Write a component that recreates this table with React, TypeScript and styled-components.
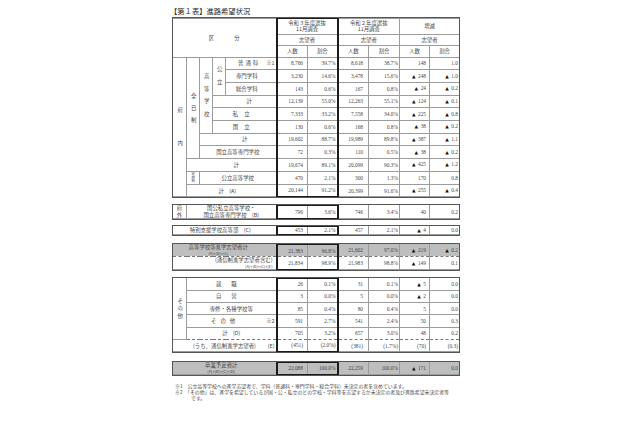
import React from 'react';
import styled, { createGlobalStyle, css } from 'styled-components';

const GlobalStyle = createGlobalStyle`
  html, body { margin: 0; background: #fff; }
  body {
    font-family: "Liberation Serif", "Noto Sans CJK JP", serif;
    color: #474747;
  }
`;

const Page = styled.div`
  width: 640px;
  height: 426px;
  box-sizing: border-box;
  padding: 6px 0 0 172px;
  overflow: hidden;
`;

const Title = styled.div`
  height: 11px;
  font-family: "Noto Sans CJK JP", sans-serif;
  font-size: 7.3px;
  line-height: 10px;
  color: #262626;
  margin-left: -2px;
`;

// each block of the report is its own small table
const Box = styled.table<{ $gap?: number }>`
  border-collapse: collapse;
  table-layout: fixed;
  width: 287px;
  margin-bottom: ${p => p.$gap ?? 6}px;
  outline: 1px solid #555;
  outline-offset: -1px;
`;

const Tr = styled.tr<{ $h: number }>`
  height: ${p => p.$h}px;
`;

type CellProps = {
  $al?: 'left' | 'right' | 'center';
  $pr?: number;
  $pl?: number;
  $ls?: number;
  $lh?: number;
  $tl?: boolean;
  $tr?: boolean;
  $tt?: boolean;
  $tb?: boolean;
  $gray?: boolean;
  $dt?: boolean;
  $db?: boolean;
};

const Td = styled.td<CellProps>`
  border: 1px solid #9c9c9c;
  padding: 0 ${p => p.$pr ?? 0}px 0 ${p => p.$pl ?? 0}px;
  font-size: 5.4px;
  line-height: ${p => p.$lh ?? 6}px;
  letter-spacing: ${p => p.$ls ?? 0}px;
  text-align: ${p => p.$al ?? 'center'};
  vertical-align: middle;
  white-space: nowrap;
  overflow: hidden;
  background: ${p => (p.$gray ? '#bebebe' : 'transparent')};
  ${p => p.$dt && css`border-top: 1px dashed #777;`}
  ${p => p.$db && css`border-bottom: 1px dashed #777;`}
  ${p => p.$tl && css`border-left: 2px solid #1c1c1c;`}
  ${p => p.$tr && css`border-right: 2px solid #1c1c1c;`}
  ${p => p.$tt && css`border-top: 2px solid #1c1c1c;`}
  ${p => p.$tb && css`border-bottom: 2px solid #1c1c1c;`}
`;

const Lab = styled(Td)`
  font-family: "Noto Sans CJK JP", sans-serif;
`;

const Vert = styled.span<{ $ls: number; $fs?: number }>`
  display: inline-block;
  writing-mode: vertical-rl;
  letter-spacing: ${p => p.$ls}px;
  font-size: ${p => p.$fs ?? 5.4}px;
  line-height: 1;
  margin-top: ${p => p.$ls}px;
`;

const Mark = styled.span`
  float: right;
  margin-right: 1px;
  letter-spacing: 0;
`;

const Small = styled.span`
  font-size: 4px;
  letter-spacing: 0;
`;

const Tri = styled.span`
  font-family: "DejaVu Sans", sans-serif;
  font-size: 4.6px;
  color: #111;
  margin-right: 2.5px;
`;

const Notes = styled.div`
  margin-top: 7px;
  width: 292px;
  font-family: "Noto Sans CJK JP", sans-serif;
  font-size: 4.9px;
  line-height: 6px;
  color: #4a4a4a;
`;

const Note = styled.div`
  padding-left: 19px;
  text-indent: -16px;
  white-space: nowrap;
`;

const Cols = () => (
  <colgroup>
    {[14, 13, 13, 13, 51, 31, 30, 31, 31, 30, 30].map((w, i) => (
      <col key={i} style={{ width: w }} />
    ))}
  </colgroup>
);

const fmt = (s: string) =>
  s.startsWith('▲') ? (
    <>
      <Tri>▲</Tri>
      {s.slice(1)}
    </>
  ) : (
    s
  );

type DataProps = {
  v: string[];
  first?: boolean;
  last?: boolean;
  gray?: boolean;
  dt?: boolean;
  db?: boolean;
};

const Data: React.FC<DataProps> = ({ v, first, last, gray, dt, db }) => {
  const pads = [4, 1, 5, 1, 3, 1];
  return (
    <>
      {v.map((x, i) => (
        <Td
          key={i}
          $al="right"
          $pr={pads[i]}
          $gray={gray}
          $dt={dt}
          $db={db}
          $tl={i === 0}
          $tr={i === 1}
          $tt={first && i < 2}
          $tb={last && i < 2}
        >
          {fmt(x)}
        </Td>
      ))}
    </>
  );
};

const R = 12.7;
const S = 12.3;

const App: React.FC = () => (
  <Page>
    <GlobalStyle />
    <Title>【第１表】進路希望状況</Title>

    <Box $gap={6}>
      <Cols />
      <tbody>
        <Tr $h={16}>
          <Lab colSpan={5} rowSpan={3} $ls={20} $pl={20}>区分</Lab>
          <Lab colSpan={2} $tl $tr $tt $lh={6.5}>令和３年度選抜<br />11月調査</Lab>
          <Lab colSpan={2} $lh={6.5}>令和２年度選抜<br />11月調査</Lab>
          <Lab colSpan={2}>増減</Lab>
        </Tr>
        <Tr $h={11}>
          <Lab colSpan={2} $tl $tr>志望者</Lab>
          <Lab colSpan={2}>志望者</Lab>
          <Lab colSpan={2}>志望者</Lab>
        </Tr>
        <Tr $h={12}>
          <Lab $tl>人数</Lab>
          <Lab $tr>割合</Lab>
          <Lab>人数</Lab>
          <Lab>割合</Lab>
          <Lab>人数</Lab>
          <Lab>割合</Lab>
        </Tr>
        <Tr $h={R}>
          <Lab rowSpan={11}><Vert $ls={28}>府内</Vert></Lab>
          <Lab rowSpan={8}><Vert $ls={6.6}>全日制</Vert></Lab>
          <Lab rowSpan={6}><Vert $ls={7.4}>高等学校</Vert></Lab>
          <Lab rowSpan={3}><Vert $ls={7.4}>公立</Vert></Lab>
          <Lab $al="left" $pl={12} $ls={2}>普通科<Mark>※1</Mark></Lab>
          <Data v={['8,766', '39.7%', '8,618', '38.7%', '148', '1.0']} />
        </Tr>
        <Tr $h={R}>
          <Lab $pr={8}>専門学科</Lab>
          <Data v={['3,230', '14.6%', '3,478', '15.6%', '▲248', '▲1.0']} />
        </Tr>
        <Tr $h={R}>
          <Lab $pr={8}>総合学科</Lab>
          <Data v={['143', '0.6%', '167', '0.8%', '▲24', '▲0.2']} />
        </Tr>
        <Tr $h={R}>
          <Lab colSpan={2} $pl={10}>計</Lab>
          <Data v={['12,139', '55.0%', '12,263', '55.1%', '▲124', '▲0.1']} />
        </Tr>
        <Tr $h={R}>
          <Lab colSpan={2} $ls={6}>私立</Lab>
          <Data v={['7,333', '33.2%', '7,558', '34.0%', '▲225', '▲0.8']} />
        </Tr>
        <Tr $h={R}>
          <Lab colSpan={2} $ls={6}>国立</Lab>
          <Data v={['130', '0.6%', '168', '0.8%', '▲38', '▲0.2']} />
        </Tr>
        <Tr $h={R}>
          <Lab colSpan={3} $pl={14}>計</Lab>
          <Data v={['19,602', '88.7%', '19,989', '89.8%', '▲387', '▲1.1']} />
        </Tr>
        <Tr $h={R}>
          <Lab colSpan={3}>国立高等専門学校</Lab>
          <Data v={['72', '0.3%', '110', '0.5%', '▲38', '▲0.2']} />
        </Tr>
        <Tr $h={R}>
          <Lab colSpan={4} $pl={10}>計</Lab>
          <Data v={['19,674', '89.1%', '20,099', '90.3%', '▲425', '▲1.2']} />
        </Tr>
        <Tr $h={R}>
          <Lab><Vert $ls={0.2} $fs={3.4}>定時制</Vert></Lab>
          <Lab colSpan={3}>公立高等学校</Lab>
          <Data v={['470', '2.1%', '300', '1.3%', '170', '0.8']} />
        </Tr>
        <Tr $h={R}>
          <Lab colSpan={4} $pr={8}>計　(A)</Lab>
          <Data v={['20,144', '91.2%', '20,399', '91.6%', '▲255', '▲0.4']} last />
        </Tr>
      </tbody>
    </Box>

    <Box $gap={5}>
      <Cols />
      <tbody>
        <Tr $h={13}>
          <Lab $lh={6.5}>府<br />外</Lab>
          <Lab colSpan={4} $lh={6.5}>国公私立高等学校・<br />国立高等専門学校　(B)</Lab>
          <Data v={['796', '3.6%', '746', '3.4%', '40', '0.2']} first last />
        </Tr>
      </tbody>
    </Box>

    <Box $gap={7}>
      <Cols />
      <tbody>
        <Tr $h={9}>
          <Lab colSpan={5} $pr={8}>特別支援学校高等部　(C)</Lab>
          <Data v={['453', '2.1%', '457', '2.1%', '▲4', '0.0']} first last />
        </Tr>
      </tbody>
    </Box>

    <Box $gap={6}>
      <Cols />
      <tbody>
        <Tr $h={12}>
          <Lab colSpan={5} $gray $db $pr={12}>
            高等学校等進学志望者計<br />
            <Small>(A)+(B)+(C)</Small>
          </Lab>
          <Data v={['21,383', '96.8%', '21,602', '97.0%', '▲219', '▲0.2']} first gray db />
        </Tr>
        <Tr $h={12}>
          <Lab colSpan={5} $dt $al="right" $pr={3}>
            (通信制進学志望者含む)<br />
            <Small>(A)+(B)+(C)+(E)</Small>
          </Lab>
          <Data v={['21,834', '98.9%', '21,983', '98.8%', '▲149', '0.1']} last dt />
        </Tr>
      </tbody>
    </Box>

    <Box $gap={8}>
      <Cols />
      <tbody>
        <Tr $h={S}>
          <Lab rowSpan={5}><Vert $ls={2}>その他</Vert></Lab>
          <Lab colSpan={4} $ls={10}>就職</Lab>
          <Data v={['26', '0.1%', '31', '0.1%', '▲5', '0.0']} first />
        </Tr>
        <Tr $h={S}>
          <Lab colSpan={4} $ls={10}>自営</Lab>
          <Data v={['3', '0.0%', '5', '0.0%', '▲2', '0.0']} />
        </Tr>
        <Tr $h={S}>
          <Lab colSpan={4}>専修・各種学校等</Lab>
          <Data v={['85', '0.4%', '80', '0.4%', '5', '0.0']} />
        </Tr>
        <Tr $h={S}>
          <Lab colSpan={4} $ls={4} $al="left" $pl={24}>その他<Mark>※2</Mark></Lab>
          <Data v={['591', '2.7%', '541', '2.4%', '50', '0.3']} />
        </Tr>
        <Tr $h={S}>
          <Lab colSpan={4} $db>計　(D)</Lab>
          <Data v={['705', '3.2%', '657', '3.0%', '48', '0.2']} db />
        </Tr>
        <Tr $h={S}>
          <Lab colSpan={5} $dt $al="left" $pl={20}>
            (うち、通信制進学志望者)<Mark>(E)</Mark>
          </Lab>
          <Data v={['(451)', '(2.0%)', '(381)', '(1.7%)', '(70)', '(0.3)']} last dt />
        </Tr>
      </tbody>
    </Box>

    <Box $gap={0}>
      <Cols />
      <tbody>
        <Tr $h={13}>
          <Lab colSpan={5} $gray $pr={6}>
            卒業予定者計<br />
            <Small>(A)+(B)+(C)+(D)</Small>
          </Lab>
          <Data v={['22,088', '100.0%', '22,259', '100.0%', '▲171', '0.0']} first last gray />
        </Tr>
      </tbody>
    </Box>

    <Notes>
      <Note>※1　公立高等学校への進学志望者で、学科（普通科・専門学科・総合学科）未決定の者を含めています。</Note>
      <Note>
        ※2　「その他」は、進学を希望しているが国・公・私立のどの学校・学科等を志望するか未決定の者及び進路希望未決定者等
        <br />です。
      </Note>
    </Notes>
  </Page>
);

export default App;
